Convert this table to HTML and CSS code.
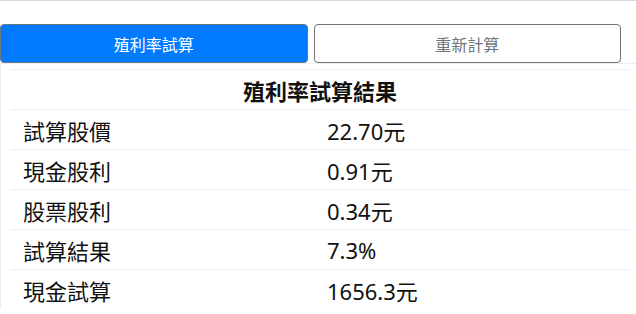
FILE: index.html
```html
<!DOCTYPE html>
<html lang="zh-Hant">
<head>
<meta charset="utf-8">
<link rel="stylesheet" href="styles.css">
</head>
<body>
<div class="page">
  <div class="actions">
    <button class="btn btn-primary">殖利率試算</button>
    <button class="btn btn-outline">重新計算</button>
  </div>
  <div class="result">
    <table class="result-table">
      <thead>
        <tr><th colspan="2">殖利率試算結果</th></tr>
      </thead>
      <tbody>
        <tr><td class="label">試算股價</td><td class="value">22.70元</td></tr>
        <tr><td class="label">現金股利</td><td class="value">0.91元</td></tr>
        <tr><td class="label">股票股利</td><td class="value">0.34元</td></tr>
        <tr><td class="label">試算結果</td><td class="value">7.3%</td></tr>
        <tr><td class="label">現金試算</td><td class="value">1656.3元</td></tr>
      </tbody>
    </table>
  </div>
</div>
</body>
</html>
```

FILE: styles.css
```css
html, body {
  margin: 0;
  padding: 0;
  background: #fff;
}
body {
  font-family: "Noto Sans", "Noto Sans CJK TC", sans-serif;
  color: #111;
}
.page {
  border-top: 1px solid #d6d9dd;
  padding-top: 23px;
}
.actions {
  display: flex;
  gap: 6px;
  padding-right: 15px;
}
.btn {
  flex: 1;
  height: 39px;
  border-radius: 4px;
  font-family: "Noto Sans CJK TC", sans-serif;
  font-size: 16px;
  border: 1px solid #6c757d;
  background: #fff;
  color: #6c757d;
  padding: 0;
}
.btn-primary {
  background: #007bff;
  color: #fff;
}
.result {
  border-top: 1px solid #eceeef;
  border-left: 1px solid #eceeef;
  padding: 5px 7px 0 10px;
}
.result-table {
  width: 618px;
  border-collapse: collapse;
}
.result-table th {
  font-family: "Noto Sans CJK TC", sans-serif;
  font-weight: 600;
  font-size: 22px;
  height: 39px;
  padding: 0;
  border-top: 1px solid #eceeef;
  text-align: center;
}
.result-table td {
  font-size: 22px;
  height: 39px;
  padding: 0 12px;
  border-top: 1px solid #eceeef;
}
.result-table .label {
  width: 280px;
  font-family: "Noto Sans CJK TC", sans-serif;
}
.value {
  font-family: "Noto Sans", "Noto Sans CJK TC", sans-serif;
}
```
